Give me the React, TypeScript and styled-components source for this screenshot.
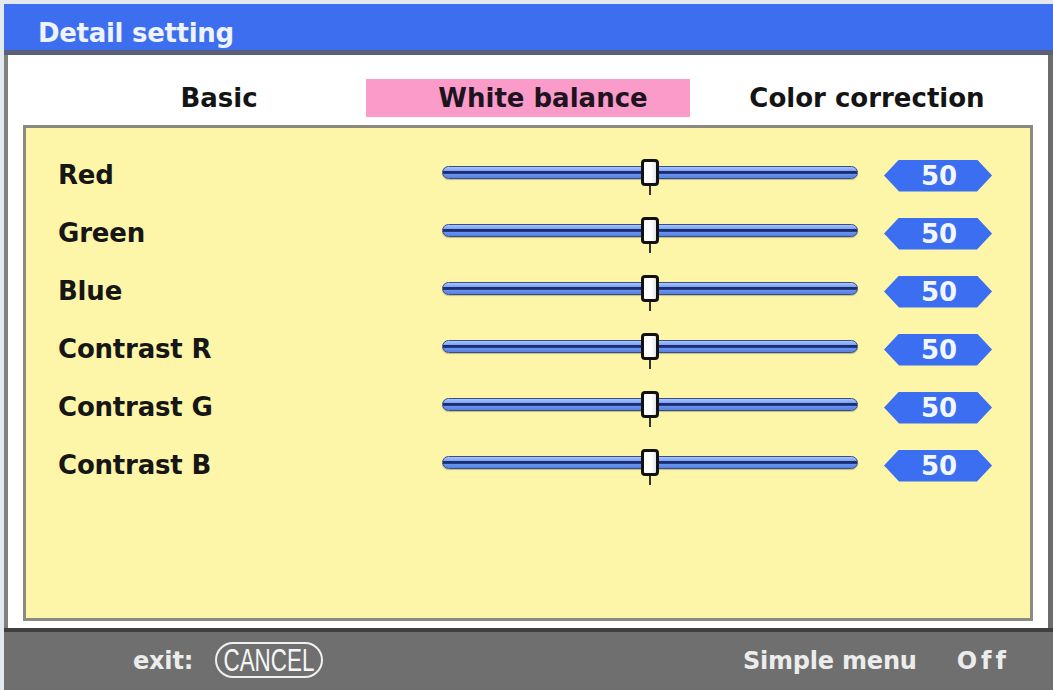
import React from "react";
import styled, { createGlobalStyle } from "styled-components";

const GlobalStyle = createGlobalStyle`
  html, body { margin: 0; padding: 0; background: #eef0f4; }
  * { box-sizing: border-box; }
`;

const FONT = `"DejaVu Sans", "Noto Sans", sans-serif`;

const Screen = styled.div`
  width: 1053px;
  height: 690px;
  padding: 4px 0 0 4px;
  display: flex;
  flex-direction: column;
  font-family: ${FONT};
  background: #e4e8ef;
`;

const TitleBar = styled.div`
  height: 51px;
  flex: none;
  background: #3d6ef0;
  border-bottom: 5px solid #5a6176;
  color: #eef3ff;
  font-size: 26px;
  font-weight: bold;
  letter-spacing: -0.3px;
  line-height: 30px;
  padding: 14px 0 0 34px;
`;

const Body = styled.div`
  flex: 1;
  display: flex;
  flex-direction: column;
  background: #ffffff;
  border-left: 4px solid #7f7f7f;
  border-right: 5px solid #6c6c6c;
  padding: 24px 15px 7px 15px;
`;

const TabRow = styled.div`
  display: grid;
  grid-template-columns: repeat(3, 324px);
  margin-left: 19px;
  height: 38px;
  flex: none;
`;

const Tab = styled.div<{ $active?: boolean }>`
  display: flex;
  align-items: center;
  justify-content: center;
  padding-left: 30px;
  background: ${(p) => (p.$active ? "#fa9bca" : "transparent")};
  color: ${(p) => (p.$active ? "#1d1420" : "#141414")};
  font-size: 26px;
  font-weight: bold;
  letter-spacing: 0px;
  line-height: 30px;
`;

const Panel = styled.div`
  margin-top: 8px;
  flex: 1;
  background: #fdf6a8;
  border: 3px solid #8a8a83;
  padding: 17px 0 0 32px;
`;

const Row = styled.div`
  display: grid;
  grid-template-columns: 358px 416px 108px;
  column-gap: 26px;
  align-items: center;
  height: 58px;
`;

const Label = styled.div`
  color: #161616;
  font-size: 26px;
  font-weight: bold;
  letter-spacing: -0.2px;
  line-height: 30px;
  padding-top: 2px;
`;

const SliderWrap = styled.div`
  position: relative;
  height: 30px;
  display: flex;
  align-items: center;
  margin-top: -3px;
`;

const Track = styled.div`
  width: 100%;
  height: 13px;
  border-radius: 7px;
  border: 1.5px solid #3a4d86;
  background: linear-gradient(
    to bottom,
    #a9c5ff 0%,
    #7fa5f6 32%,
    #1c2d72 40%,
    #1c2d72 58%,
    #6a93ee 66%,
    #5680e2 100%
  );
  box-shadow: 0 1px 1px rgba(80, 80, 60, 0.35);
`;

const Knob = styled.div`
  position: absolute;
  top: 1px;
  width: 18px;
  height: 27px;
  margin-left: -9px;
  background: linear-gradient(to right, #ffffff 60%, #e4e4e4);
  border: 3px solid #111;
  border-radius: 4px;
  &::after {
    content: "";
    position: absolute;
    left: 50%;
    margin-left: -1px;
    top: 24px;
    width: 2px;
    height: 9px;
    background: #333;
  }
`;

const Badge = styled.div`
  height: 32px;
  margin-top: 3px;
  display: flex;
  align-items: center;
  justify-content: center;
  background: #3b6ef0;
  clip-path: polygon(0 50%, 15px 0, calc(100% - 15px) 0, 100% 50%, calc(100% - 15px) 100%, 15px 100%);
  color: #f2f6ff;
  font-size: 26px;
  font-weight: bold;
  line-height: 30px;
  padding-left: 2px;
`;

const Footer = styled.div`
  height: 62px;
  flex: none;
  display: flex;
  align-items: center;
  background: #6f6f6f;
  border-top: 4px solid #3f3f3f;
  padding: 0 43px 0 129px;
  color: #ececec;
  font-size: 24px;
  font-weight: bold;
  line-height: 30px;
`;

const FooterText = styled.span<{ $spaced?: boolean }>`
  letter-spacing: ${(p) => (p.$spaced ? "4px" : "-0.2px")};
`;

const Pill = styled.div`
  margin-left: 22px;
  width: 108px;
  height: 36px;
  border: 2.5px solid #f0f0f0;
  border-radius: 18px;
  display: flex;
  align-items: center;
  justify-content: center;
  overflow: visible;
  margin-top: -2px;
`;

const PillText = styled.span`
  display: inline-block;
  font-family: "Liberation Sans", Arial, sans-serif;
  font-weight: normal;
  font-size: 32px;
  line-height: 32px;
  color: #f6f6f6;
  transform: scaleX(0.7);
  white-space: nowrap;
`;

const RightGroup = styled.div`
  margin-left: auto;
  display: flex;
  gap: 40px;
`;

const rows = [
  { label: "Red", value: 50 },
  { label: "Green", value: 50 },
  { label: "Blue", value: 50 },
  { label: "Contrast R", value: 50 },
  { label: "Contrast G", value: 50 },
  { label: "Contrast B", value: 50 },
];

export default function App() {
  return (
    <>
      <GlobalStyle />
      <Screen>
        <TitleBar>Detail setting</TitleBar>
        <Body>
          <TabRow>
            <Tab>Basic</Tab>
            <Tab $active>White balance</Tab>
            <Tab>Color correction</Tab>
          </TabRow>
          <Panel>
            {rows.map((r) => (
              <Row key={r.label}>
                <Label>{r.label}</Label>
                <SliderWrap>
                  <Track />
                  <Knob style={{ left: `${r.value}%` }} />
                </SliderWrap>
                <Badge>{r.value}</Badge>
              </Row>
            ))}
          </Panel>
        </Body>
        <Footer>
          <FooterText>exit:</FooterText>
          <Pill>
            <PillText>CANCEL</PillText>
          </Pill>
          <RightGroup>
            <FooterText>Simple menu</FooterText>
            <FooterText $spaced>Off</FooterText>
          </RightGroup>
        </Footer>
      </Screen>
    </>
  );
}
